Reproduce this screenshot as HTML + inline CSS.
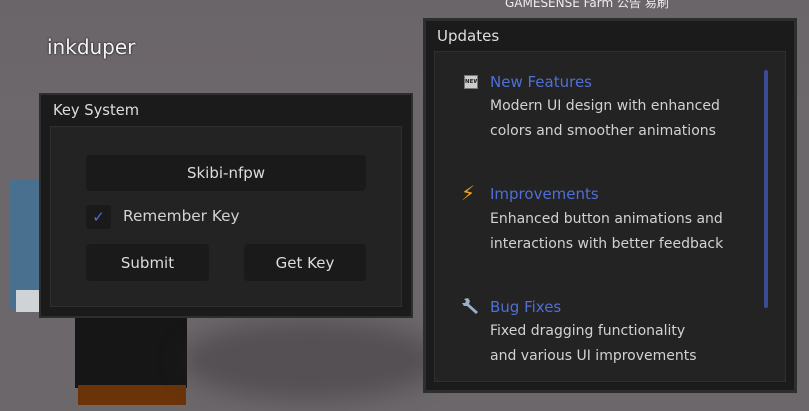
<!DOCTYPE html>
<html><head><meta charset="utf-8"><style>
*{margin:0;padding:0;box-sizing:border-box}
body{width:809px;height:411px;overflow:hidden;position:relative;background:#6c676b;font-family:"DejaVu Sans","Liberation Sans",sans-serif}
.a{position:absolute}
.t{color:#d2d2d2;font-size:14px;white-space:nowrap}
.blue{color:#4f6fd6;font-size:15px}
.btn{background:#1a1a1a;border-radius:4px;color:#dcdcdc;font-size:15px;text-align:center}
</style></head><body>
<div class="a" style="left:0;top:0;width:809px;height:120px;background:linear-gradient(#6a6569,#6d686c)"></div>
<div class="a" style="left:10px;top:180px;width:32px;height:130px;background:#4a7090"></div>
<div class="a" style="left:16px;top:290px;width:26px;height:22px;background:#cfd3d6"></div>
<div class="a" style="left:75px;top:318px;width:112px;height:70px;background:#161616"></div>
<div class="a" style="left:78px;top:385px;width:108px;height:20px;background:#6a3408"></div>
<div class="a" style="left:180px;top:320px;width:260px;height:80px;border-radius:50%;background:rgba(40,38,40,.35);filter:blur(12px)"></div>
<div class="a" style="left:47px;top:35px;color:#f4f4f4;font-size:20px;text-shadow:0 0 2px #000">inkduper</div>
<div class="a" style="left:505px;top:-6px;color:#eee;font-size:12px">GAMESENSE Farm 公告 易刷</div>

<div class="a" style="left:39px;top:93px;width:374px;height:225px;background:#1b1b1b;border:2px solid #2e2e2e"></div>
<div class="a t" style="left:53px;top:102px;font-size:14.7px;color:#dedede">Key System</div>
<div class="a" style="left:50px;top:126px;width:352px;height:181px;background:#232323;border:1px solid #2f2f2f"></div>
<div class="a btn" style="left:86px;top:155px;width:280px;height:36px;line-height:37px">Skibi-nfpw</div>
<div class="a" style="left:86px;top:205px;width:25px;height:24px;background:#1a1a1a;border-radius:3px;color:#4f6fd6;font-size:15px;text-align:center;line-height:24px">✓</div>
<div class="a t" style="left:123px;top:207px;font-size:15.3px">Remember Key</div>
<div class="a btn" style="left:86px;top:244px;width:123px;height:37px;line-height:38px">Submit</div>
<div class="a btn" style="left:244px;top:244px;width:122px;height:37px;line-height:38px">Get Key</div>

<div class="a" style="left:423px;top:18px;width:374px;height:375px;background:#1b1b1b;border:3px solid #2e2e2e"></div>
<div class="a t" style="left:437px;top:27px;font-size:15px;color:#dedede">Updates</div>
<div class="a" style="left:434px;top:51px;width:352px;height:331px;background:#232323;border:1px solid #2f2f2f"></div>
<div class="a" style="left:764px;top:70px;width:4px;height:238px;background:#3b4c94;border-radius:2px"></div>

<div class="a" style="left:464px;top:75px;width:14px;height:14px;background:#ccc;border:1px solid #777;color:#222;font-size:5.5px;font-weight:bold;text-align:center;line-height:12px;overflow:hidden">NEW</div>
<div class="a blue" style="left:490px;top:73px">New Features</div>
<div class="a t" style="left:490px;top:98px">Modern UI design with enhanced</div>
<div class="a t" style="left:490px;top:123px">colors and smoother animations</div>

<div class="a" style="left:461px;top:181px;color:#f0a020;font-size:20px">⚡</div>
<div class="a blue" style="left:490px;top:185px">Improvements</div>
<div class="a t" style="left:490px;top:211px">Enhanced button animations and</div>
<div class="a t" style="left:490px;top:236px">interactions with better feedback</div>

<svg class="a" style="left:461px;top:296px" width="20" height="20" viewBox="0 0 20 20"><path d="M3 3 L7 2 L9 5 L8 8 L17 16 L15 18 L6 10 L3 10 L1 7 L4 7 L5 5 Z" fill="#9ab0c8"/></svg>
<div class="a blue" style="left:490px;top:298px">Bug Fixes</div>
<div class="a t" style="left:490px;top:323px">Fixed dragging functionality</div>
<div class="a t" style="left:490px;top:348px">and various UI improvements</div>
</body></html>
